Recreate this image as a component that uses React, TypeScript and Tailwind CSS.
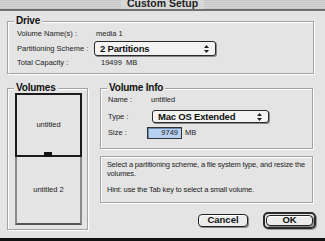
import React from 'react';

const font = "font-['Liberation_Sans',Arial,sans-serif]";

const Group: React.FC<{ title: string; className: string; children?: React.ReactNode }> = ({ title, className, children }) => (
  <div className={`relative border border-[#a3a3a3] shadow-[inset_1px_1px_0_#fff,1px_1px_0_#fff] ${className}`}>
    {/* legend sits on the top border */}
    <span className="absolute left-[6px] -top-[7px] bg-[#e4e4e4] px-[2px] text-[10px] leading-[12px] font-bold tracking-[-0.2px] text-[#111]">
      {title}
    </span>
    {children}
  </div>
);

const Arrows: React.FC = () => (
  <svg width="5" height="8" viewBox="0 0 5 8" className="shrink-0">
    <path d="M2.5 0 L5 3 L0 3 Z" fill="#222" />
    <path d="M0 5 L5 5 L2.5 8 Z" fill="#222" />
  </svg>
);

const Popup: React.FC<{ label: string; className: string }> = ({ label, className }) => (
  <div className={`flex items-center justify-between rounded-[3px] border border-[#2a2a2a] bg-[#f3f3f3] pl-[5px] pr-[6px] shadow-[1px_1px_0_#8a8a8a] ${className}`}>
    <span className="text-[9.5px] font-bold leading-none tracking-[-0.2px] text-[#111]">{label}</span>
    <Arrows />
  </div>
);

const Button: React.FC<{ label: string; className: string }> = ({ label, className }) => (
  <div className={`flex items-center justify-center rounded-[4px] border border-[#222] bg-[#ececec] shadow-[1px_1px_0_#8a8a8a,inset_1px_1px_0_#fff] text-[9.5px] font-bold text-[#111] ${className}`}>
    {label}
  </div>
);

export default function App() {
  return (
    <div className={`flex h-[241px] w-[325px] flex-col overflow-hidden bg-[#e4e4e4] ${font} text-[#222]`}>
      {/* Title bar */}
      <div className="flex h-[9px] justify-center overflow-hidden bg-[repeating-linear-gradient(to_bottom,#c6c6c6_0px,#c6c6c6_1px,#d6d6d6_1px,#d6d6d6_2px)]">
        <span className="-mt-[3px] bg-[#d8d8d8] px-[6px] text-[10.5px] font-bold leading-[12px] text-[#222]">Custom Setup</span>
      </div>
      <div className="h-[2px] bg-[#6f6f6f]" />

      {/* Drive */}
      <Group title="Drive" className="ml-[7px] mt-[10px] h-[53px] w-[307px]">
        <div className="flex flex-col pl-[9px] pt-[5px] text-[7.5px]">
          <div className="flex h-[14px] items-center">
            <span className="w-[79px]">Volume Name(s) :</span>
            <span>media 1</span>
          </div>
          <div className="flex h-[15px] items-center">
            <span className="w-[77px]">Partitioning Scheme :</span>
            <Popup label="2 Partitions" className="h-[15px] w-[122px]" />
          </div>
          <div className="flex h-[14px] items-center">
            <span className="w-[84px]">Total Capacity :</span>
            <span>19499&nbsp;&nbsp;MB</span>
          </div>
        </div>
      </Group>

      <div className="mt-[14px] flex">
        {/* Volumes */}
        <Group title="Volumes" className="ml-[7px] h-[142px] w-[81px]">
          <div className="ml-[7px] mt-[4px] flex w-[67px] flex-col text-[7.5px]">
            <div className="relative flex h-[64px] items-center justify-center border-2 border-[#1c1c1c]">
              untitled
              <div className="absolute -bottom-[2px] left-[27px] h-[5px] w-[8px] bg-[#111]" />
            </div>
            <div className="flex h-[68px] items-center justify-center border-x-2 border-b-2 border-x-[#8a8a8a] border-b-[#555]">
              untitled 2
            </div>
          </div>
        </Group>

        <div className="ml-[12px] flex w-[213px] flex-col">
          {/* Volume Info */}
          <Group title="Volume Info" className="h-[61px] w-[213px]">
            <div className="flex flex-col pl-[7px] pt-[5px] text-[7.5px]">
              <div className="flex h-[12px] items-center">
                <span className="w-[43px]">Name :</span>
                <span>untitled</span>
              </div>
              <div className="mt-[3px] flex h-[15px] items-center">
                <span className="w-[44px]">Type :</span>
                <Popup label="Mac OS Extended" className="h-[13px] w-[117px]" />
              </div>
              <div className="mt-[2px] flex h-[14px] items-center">
                <span className="w-[39px]">Size :</span>
                <div className="flex h-[12px] w-[35px] items-center justify-end border border-[#333] bg-[#b9d1f0] pr-[3px] shadow-[inset_1px_1px_0_#6a8ab0]">
                  9749
                </div>
                <span className="ml-[3px]">MB</span>
              </div>
            </div>
          </Group>

          {/* Description */}
          <div className="mt-[7px] h-[47px] w-[213px] border border-[#a3a3a3] pl-[6px] pr-[2px] pt-[3px] text-[7.5px] leading-[9px] tracking-[-0.15px] shadow-[inset_1px_1px_0_#fff,1px_1px_0_#fff]">
            <p>Select a partitioning scheme, a file system type, and resize the volumes.</p>
            <p className="mt-[7px]">Hint: use the Tab key to select a small volume.</p>
          </div>

          {/* Buttons */}
          <div className="mt-[9px] flex items-center justify-end">
            <Button label="Cancel" className="h-[13px] w-[50px]" />
            <div className="ml-[15px] mr-[-3px] rounded-[5px] border-2 border-[#2a2a2a] p-[1px] shadow-[1px_1px_0_#999]">
              <Button label="OK" className="h-[11px] w-[47px]" />
            </div>
          </div>
        </div>
      </div>

      <div className="mt-auto h-[3px] bg-[#111]" />
    </div>
  );
}
